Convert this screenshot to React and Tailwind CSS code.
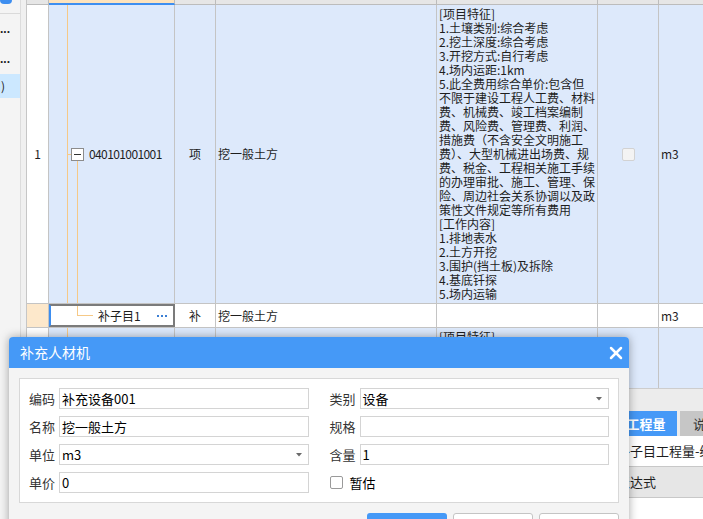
import React from 'react';
import { X } from 'lucide-react';

const descLines = [
  '[项目特征]',
  '1.土壤类别:综合考虑',
  '2.挖土深度:综合考虑',
  '3.开挖方式:自行考虑',
  '4.场内运距:1km',
  '5.此全费用综合单价:包含但',
  '不限于建设工程人工费、材料',
  '费、机械费、竣工档案编制',
  '费、风险费、管理费、利润、',
  '措施费（不含安全文明施工',
  '费）、大型机械进出场费、规',
  '费、税金、工程相关施工手续',
  '的办理审批、施工、管理、保',
  '险、周边社会关系协调以及政',
  '策性文件规定等所有费用',
  '[工作内容]',
  '1.排地表水',
  '2.土方开挖',
  '3.围护(挡土板)及拆除',
  '4.基底钎探',
  '5.场内运输',
];

function LeftPanel() {
  return (
    <div className="w-[21px] shrink-0 bg-[#f4f4f4] border-r border-[#dcdcdc] flex flex-col overflow-hidden">
      <div className="h-[14px] shrink-0 border-b border-[#dadada]">
        <div className="w-[12px] h-[4px] rounded-b-full bg-[#3d8ef0]" />
      </div>
      <div className="h-[30px] flex items-center text-[12px] font-bold text-[#222] font-['Liberation_Sans',sans-serif]">...</div>
      <div className="h-[30px] flex items-center text-[12px] font-bold text-[#222] font-['Liberation_Sans',sans-serif]">...</div>
      <div className="h-[24px] bg-[#cce8ff] flex items-center pl-[1px] text-[12px] text-[#222]">)</div>
    </div>
  );
}

function Arrow() {
  return (
    <svg width="6" height="4" viewBox="0 0 6 4" className="absolute right-[6px] top-[8px]">
      <path d="M0 0 L6 0 L3 3.5 Z" fill="#6a6a6a" />
    </svg>
  );
}

function Field({ label, value, arrow }) {
  return (
    <div className="flex items-center h-[21px]">
      <div className="w-[30px] shrink-0 text-[#333]">{label}</div>
      <div className="relative flex-1 h-full border border-[#d4d4d4] bg-white flex items-center pl-[2px] text-black">
        {value}
        {arrow && <Arrow />}
      </div>
    </div>
  );
}

function Table() {
  const line = 'border-r border-[#c4c4c4]';
  return (
    <div className="h-[388px] shrink-0 flex flex-col text-[12px] text-[#1e1e1e]">
      {/* header strip */}
      <div className="h-[5px] shrink-0 flex">
        <div className="w-[22px] shrink-0 border-r border-b border-[#bcbcbc] bg-[#e6e6e6]" />
        <div className="w-[126px] shrink-0 border-r border-[#bcbcbc] border-b-2 border-b-[#3d8ef0] bg-[#fde3bd]" />
        <div className="w-[41px] shrink-0 border-r border-b border-[#bcbcbc] bg-[#e6e6e6]" />
        <div className="w-[221px] shrink-0 border-r border-b border-[#bcbcbc] bg-[#e6e6e6]" />
        <div className="w-[161px] shrink-0 border-r border-b border-[#bcbcbc] bg-[#e6e6e6]" />
        <div className="w-[61px] shrink-0 border-r border-b border-[#bcbcbc] bg-[#e6e6e6]" />
        <div className="flex-1 border-b border-[#bcbcbc] bg-[#e6e6e6]" />
      </div>

      {/* row 1 */}
      <div className="h-[299px] shrink-0 flex border-b border-[#c4c4c4]">
        <div className={`w-[22px] shrink-0 ${line} bg-white flex items-center justify-center`}>1</div>
        <div className={`relative w-[126px] shrink-0 ${line} bg-[#dde9fb] flex items-center pl-[40px]`}>
          <div className="absolute left-[18px] top-0 bottom-0 w-px bg-[#f6c987]" />
          <div className="absolute left-[18px] top-[149px] w-[4px] h-px bg-[#f6c987]" />
          <div className="absolute left-[28px] top-[156px] bottom-0 w-px bg-[#f6c987]" />
          <div className="absolute left-[22px] top-[143px] w-[13px] h-[13px] border border-[#8c8c8c] bg-white flex items-center justify-center">
            <div className="w-[7px] h-px bg-[#333]" />
          </div>
          <span className="tracking-[-0.6px]">040101001001</span>
        </div>
        <div className={`w-[41px] shrink-0 ${line} bg-[#dde9fb] flex items-center justify-center`}>项</div>
        <div className={`w-[221px] shrink-0 ${line} bg-[#dde9fb] flex items-center pl-[2px]`}>挖一般土方</div>
        <div className={`w-[161px] shrink-0 ${line} bg-[#dde9fb] pl-[2px] pt-[2px] leading-[14px] whitespace-nowrap overflow-hidden`}>
          {descLines.map((t, i) => (
            <div key={i}>{t}</div>
          ))}
        </div>
        <div className={`w-[61px] shrink-0 ${line} bg-[#dde9fb] flex items-center justify-center`}>
          <div className="w-[13px] h-[13px] rounded-[2px] border border-[#d2d2d2] bg-[#f3f3f3]" />
        </div>
        <div className="flex-1 bg-[#dde9fb] flex items-center pl-[2px]">m3</div>
      </div>

      {/* row 2 */}
      <div className="h-[24px] shrink-0 flex border-b border-[#c4c4c4]">
        <div className={`w-[22px] shrink-0 ${line} bg-[#fde8cb]`} />
        <div className="relative w-[126px] shrink-0 border-2 border-[#7b7b7b] border-l-[#3d8ef0] bg-white flex items-center pl-[47px] pr-[6px]">
          <div className="absolute left-[26px] top-0 h-[9px] w-px bg-[#f6c987]" />
          <div className="absolute left-[26px] top-[9px] w-[16px] h-px bg-[#f6c987]" />
          <span className="flex-1">补子目1</span>
          <div className="flex gap-[2px]">
            <div className="w-[2px] h-[2px] bg-[#3b7fd4]" />
            <div className="w-[2px] h-[2px] bg-[#3b7fd4]" />
            <div className="w-[2px] h-[2px] bg-[#3b7fd4]" />
          </div>
        </div>
        <div className={`w-[41px] shrink-0 ${line} bg-white flex items-center justify-center`}>补</div>
        <div className={`w-[221px] shrink-0 ${line} bg-white flex items-center pl-[2px]`}>挖一般土方</div>
        <div className={`w-[161px] shrink-0 ${line} bg-white`} />
        <div className={`w-[61px] shrink-0 ${line} bg-white`} />
        <div className="flex-1 bg-white flex items-center pl-[2px]">m3</div>
      </div>

      {/* row 3 */}
      <div className="flex-1 flex">
        <div className={`w-[22px] shrink-0 ${line} bg-white`} />
        <div className={`relative w-[126px] shrink-0 ${line} bg-[#dde9fb]`}>
          <div className="absolute left-[18px] top-0 bottom-0 w-px bg-[#f6c987]" />
        </div>
        <div className={`w-[41px] shrink-0 ${line} bg-[#dde9fb]`} />
        <div className={`w-[221px] shrink-0 ${line} bg-[#dde9fb]`} />
        <div className={`w-[161px] shrink-0 ${line} bg-[#dde9fb] pl-[2px] pt-[2px] leading-[14px]`}>[项目特征]</div>
        <div className={`w-[61px] shrink-0 ${line} bg-[#dde9fb]`} />
        <div className="flex-1 bg-[#dde9fb]" />
      </div>
    </div>
  );
}

function BottomPanel() {
  return (
    <div className="flex-1 flex flex-col text-[13px] text-[#1e1e1e]">
      <div className="h-[23px] shrink-0 bg-[#ececec] border-t border-[#cdcdcd]" />
      <div className="h-[25px] shrink-0 bg-[#ececec] flex">
        <div className="flex-1" />
        <div className="w-[88px] shrink-0 flex gap-[3px] overflow-hidden">
          <div className="w-[62px] shrink-0 bg-[#4599f7] text-white font-bold flex items-center justify-center">工程量</div>
          <div className="w-[61px] shrink-0 bg-[#c6c6c6] text-[#333] flex items-center pl-[13px] whitespace-nowrap">说明信息</div>
        </div>
      </div>
      <div className="h-[30px] shrink-0 bg-white flex">
        <div className="flex-1" />
        <div className="w-[88px] shrink-0 flex items-center pl-[2px] whitespace-nowrap overflow-hidden">补子目工程量-绘图输入</div>
      </div>
      <div className="h-[32px] shrink-0 bg-[#e6e6e6] border-y border-[#c8c8c8] flex">
        <div className="flex-1" />
        <div className="w-[88px] shrink-0 flex items-center pl-[2px] whitespace-nowrap overflow-hidden">表达式</div>
      </div>
      <div className="flex-1 bg-white" />
    </div>
  );
}

function Dialog() {
  return (
    <div className="absolute left-[9px] top-[337px] w-[620px] h-[200px] bg-[#f4f4f4] rounded-t-[4px] shadow-[0_0_10px_rgba(0,0,0,0.35)]">
      <div className="h-[31px] bg-[#4599f7] rounded-t-[4px] flex items-center justify-between pl-[11px] pr-[3px] text-white text-[14px]">
        <span>补充人材机</span>
        <X size={20} strokeWidth={3} color="#ffffff" />
      </div>
      <div className="px-[10px] pt-[10px]">
        <div className="border border-[#d8d8d8] bg-white p-[9px] grid grid-cols-2 gap-x-[21px] gap-y-[7px] text-[13px]">
          <Field label="编码" value="补充设备001" />
          <Field label="类别" value="设备" arrow />
          <Field label="名称" value="挖一般土方" />
          <Field label="规格" value="" />
          <Field label="单位" value="m3" arrow />
          <Field label="含量" value="1" />
          <Field label="单价" value="0" />
          <div className="flex items-center h-[21px]">
            <div className="w-[13px] h-[13px] rounded-[2px] border border-[#9a9a9a] bg-white" />
            <span className="ml-[7px] text-black">暂估</span>
          </div>
        </div>
        <div className="flex justify-end gap-[6px] mt-[10px] text-[13px]">
          <div className="w-[80px] h-[26px] rounded-[3px] bg-[#4599f7] text-white flex items-center justify-center">确定</div>
          <div className="w-[80px] h-[26px] rounded-[3px] border border-[#c4c4c4] bg-white flex items-center justify-center">取消</div>
          <div className="w-[80px] h-[26px] rounded-[3px] border border-[#c4c4c4] bg-white flex items-center justify-center">帮助</div>
        </div>
      </div>
    </div>
  );
}

export default function App() {
  return (
    <div className="relative w-[703px] h-[519px] overflow-hidden bg-white flex font-['Noto_Sans_CJK_SC','Noto_Sans',sans-serif]">
      <LeftPanel />
      <div className="w-[6px] shrink-0 bg-[#f0f0f0] border-r border-[#c6c6c6]" />
      <div className="flex-1 min-w-0 flex flex-col">
        <Table />
        <BottomPanel />
      </div>
      <Dialog />
    </div>
  );
}
